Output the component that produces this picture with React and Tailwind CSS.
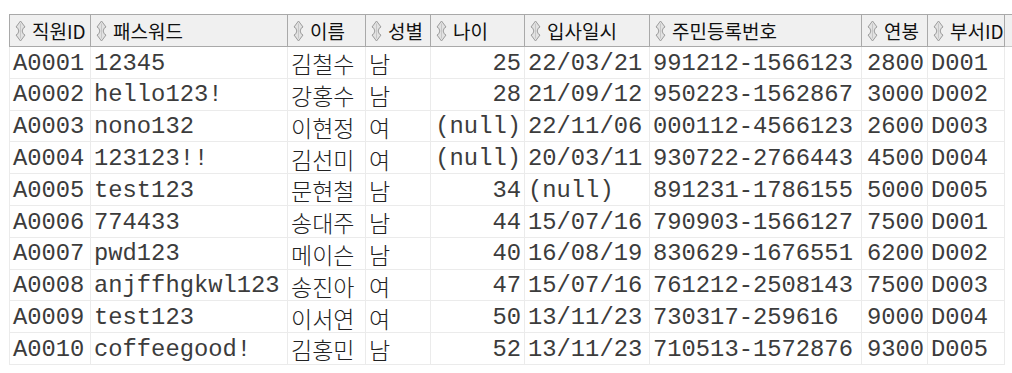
import React from "react";

const cols = [
  { key: "id", label: "직원ID", w: 82, align: "left" },
  { key: "pw", label: "패스워드", w: 197, align: "left" },
  { key: "name", label: "이름", w: 78, align: "left", ko: true },
  { key: "gender", label: "성별", w: 65, align: "left", ko: true },
  { key: "age", label: "나이", w: 94, align: "right" },
  { key: "hire", label: "입사일시", w: 125, align: "left" },
  { key: "rrn", label: "주민등록번호", w: 212, align: "left" },
  { key: "sal", label: "연봉", w: 66, align: "right" },
  { key: "dept", label: "부서ID", w: 77, align: "left" },
];

const rows = [
  ["A0001", "12345", "김철수", "남", "25", "22/03/21", "991212-1566123", "2800", "D001"],
  ["A0002", "hello123!", "강홍수", "남", "28", "21/09/12", "950223-1562867", "3000", "D002"],
  ["A0003", "nono132", "이현정", "여", "(null)", "22/11/06", "000112-4566123", "2600", "D003"],
  ["A0004", "123123!!", "김선미", "여", "(null)", "20/03/11", "930722-2766443", "4500", "D004"],
  ["A0005", "test123", "문현철", "남", "34", "(null)", "891231-1786155", "5000", "D005"],
  ["A0006", "774433", "송대주", "남", "44", "15/07/16", "790903-1566127", "7500", "D001"],
  ["A0007", "pwd123", "메이슨", "남", "40", "16/08/19", "830629-1676551", "6200", "D002"],
  ["A0008", "anjffhgkwl123", "송진아", "여", "47", "15/07/16", "761212-2508143", "7500", "D003"],
  ["A0009", "test123", "이서연", "여", "50", "13/11/23", "730317-259616", "9000", "D004"],
  ["A0010", "coffeegood!", "김홍민", "남", "52", "13/11/23", "710513-1572876", "9300", "D005"],
];

function SortIcon() {
  return (
    <svg width="11" height="22" viewBox="0 0 11 22" className="shrink-0">
      <path
        d="M5.5 1 L10 7 Q7.6 7.6 7.2 11 Q7.6 14.4 10 15 L5.5 21 L1 15 Q3.4 14.4 3.8 11 Q3.4 7.6 1 7 Z"
        fill="#e2e2e2"
        stroke="#9c9c9c"
        strokeWidth="1"
      />
      <path d="M5.5 3.5 L5.5 18.5" stroke="#c4c4c4" strokeWidth="0.9" />
    </svg>
  );
}

export default function App() {
  return (
    <div className="w-[1012px] h-[373px] bg-white pt-[14px] pl-[9px]">
      <div className="flex flex-col w-[1003px]">
        {/* header */}
        <div className="flex h-[33px] border-t border-[#a9a9a9] bg-[#ececec]">
          {cols.map((c, i) => (
            <div
              key={c.key}
              style={{ width: c.w }}
              className={
                "shrink-0 flex items-center gap-[6px] pl-[5px] border-b border-r border-[#a9a9a9] bg-[#f0f0f0] overflow-hidden " +
                (i === 0 ? "border-l" : "")
              }
            >
              <SortIcon />
              <span
                className="text-[19px] leading-none text-[#111] whitespace-nowrap"
                style={{ fontFamily: '"Noto Sans CJK KR", "Noto Sans", sans-serif' }}
              >
                {c.label}
              </span>
            </div>
          ))}
          <div className="flex-1 border-b border-[#c8c8c8] bg-[#f0f0f0]" />
        </div>
        {/* rows */}
        {rows.map((r, ri) => (
          <div key={ri} className="flex h-[31.8px]">
            {cols.map((c, ci) => (
              <div
                key={c.key}
                style={{
                  width: c.w,
                  fontFamily: c.ko
                    ? '"Noto Sans CJK KR", "Noto Sans", sans-serif'
                    : '"Liberation Mono", "Noto Sans CJK KR", monospace',
                }}
                className={
                  "shrink-0 flex items-center px-[3px] pt-[2px] border-b border-r border-[#ebebeb] whitespace-nowrap overflow-hidden " +
                  (c.align === "right" ? "justify-end " : "justify-start ") +
                  (c.ko ? "text-[23px] font-light text-[#222] " : "text-[23.8px] text-[#3c3c3c] ") +
                  (ci === 0 ? "border-l" : "")
                }
              >
                {r[ci]}
              </div>
            ))}
          </div>
        ))}
      </div>
    </div>
  );
}
